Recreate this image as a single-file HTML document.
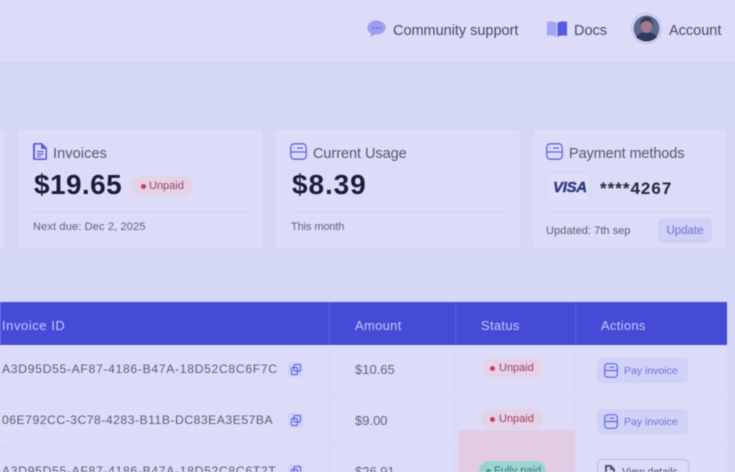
<!DOCTYPE html>
<html><head><meta charset="utf-8"><style>
html,body{margin:0;padding:0;width:735px;height:472px;overflow:hidden}
body{position:relative;background:#d5d7f6;font-family:"Liberation Sans",sans-serif;color:#4a4a68}
#w{position:absolute;left:0;top:0;width:735px;height:472px;overflow:hidden;filter:blur(.4px)}
.a{position:absolute;white-space:nowrap;line-height:1}
.card{position:absolute;top:128px;height:122px;background:#dddcf8;border:1px solid #cfd1f5;border-radius:4px;box-sizing:border-box}
.hr{position:absolute;top:211px;height:1px;background:#d0d0f1}
.badge{position:absolute;height:20px;border-radius:10px;background:#e4d3e6;color:#a33a62;font-size:11px;line-height:21px;box-sizing:border-box;white-space:nowrap}
.dot{position:absolute;width:5px;height:5px;border-radius:50%;background:#d6345f;top:8px;left:6px}
.pay{position:absolute;left:597px;width:91px;height:25px;background:#d0d1f6;border-radius:4px;color:#6c6fe0;font-size:10.5px;line-height:26px;box-sizing:border-box;padding-left:27px;white-space:nowrap}
.copy{position:absolute;left:288px;width:15px;height:15px;background:#d0d1f6;border-radius:3px}
.vl{position:absolute;width:1px;top:345px;height:127px;background:#d5d5f4}
.hl{position:absolute;left:0;width:727px;height:1px;background:#d5d5f4}
.id{position:absolute;left:2px;font-size:12.2px;color:#5c5c76;white-space:nowrap;line-height:1}
.th{position:absolute;top:319px;font-size:13px;letter-spacing:.3px;color:#c5c8fa;line-height:1;white-space:nowrap}
.amt{position:absolute;left:355px;font-size:13px;color:#62627e;line-height:1;white-space:nowrap}
.t{font-size:14.5px;color:#4a4a64}
.c{font-size:14.5px;color:#55556f}
</style></head><body><div id="w">
<div class="a" style="left:0;top:0;width:735px;height:62px;background:#dcdbf8;border-bottom:1px solid #d0d1f2"></div>

<svg class="a" style="left:367px;top:20px" width="19" height="18" viewBox="0 0 19 18"><path d="M9.5 .5C4.5 .5 .5 3.600 .5 7.800c0 2.600 1.600 4.600 3.800 5.800l-.6 3.400 4.200-2.600h1.600c5 0 9-3.200 9-6.800S14.500 .5 9.500 .5z" fill="#9c9cf0"/><circle cx="6" cy="8" r=".9" fill="#5a5ad8"/><circle cx="9.500" cy="8" r=".9" fill="#5a5ad8"/><circle cx="13" cy="8" r=".9" fill="#5a5ad8"/></svg>
<div class="a t" style="left:393px;top:23.500px;letter-spacing:-.02px">Community support</div>
<svg class="a" style="left:547px;top:21px" width="20" height="16" viewBox="0 0 20 16"><path d="M0 1c3-1 7-1 9.500 1v14C7 14 3 14 0 15z" fill="#a3a5f2"/><path d="M20 1c-3-1-7-1-9.500 1v14c2.500-2 6.500-2 9.500-1z" fill="#5558e0"/></svg>
<div class="a t" style="left:574px;top:23.500px">Docs</div>
<svg class="a" style="left:631px;top:13px" width="31" height="31" viewBox="0 0 31 31"><circle cx="15.500" cy="15.500" r="15" fill="#dcdbf8" stroke="#b9bbf2"/><circle cx="15.500" cy="15.500" r="13" fill="#5c6a96"/><path d="M5 24c3-4 7-5 10.500-5s8 1 10.500 5c-3 3-7 4.500-10.500 4.500S8 27 5 24z" fill="#303a5e"/><ellipse cx="15.500" cy="13.500" rx="5.500" ry="6.500" fill="#a47a8e"/><path d="M9 12c0-6 4-8 7-8s6 3 6 8c-2-3-4-4-6-4s-5 1-7 4z" fill="#3c3a50"/></svg>
<div class="a t" style="left:669px;top:23.500px">Account</div>

<div class="card" style="left:-20px;width:26px"></div>
<div class="card" style="left:17px;width:247px"></div>
<div class="card" style="left:274px;width:247px"></div>
<div class="card" style="left:531px;width:196px"></div>

<svg class="a" style="left:33px;top:143px" width="14" height="17" viewBox="0 0 14 17"><path d="M1.500 0h7.500l5 5v10.500a1.500 1.500 0 0 1-1.500 1.500h-11a1.500 1.500 0 0 1-1.500-1.500v-14a1.500 1.500 0 0 1 1.500-1.500z" fill="#5a5ce0"/><path d="M2 1.600h6v4.400h4.500v9.400H2z" fill="#dddcf8"/><path d="M4 8.500h6.500M4 11h6.500M4 13.300h4" stroke="#5a5ce0" stroke-width="1.200"/></svg>
<div class="a c" style="left:53px;top:146.500px;letter-spacing:.1px">Invoices</div>
<div class="a" style="left:34px;top:171px;font-size:28px;font-weight:bold;letter-spacing:.4px;color:#1c1c3a">$19.65</div>
<div class="badge" style="left:131px;top:176px;width:62px;padding-left:18px"><span class="dot" style="left:9.500px;top:7.500px"></span>Unpaid</div>
<div class="hr" style="left:33px;width:214px"></div>
<div class="a" style="left:33px;top:222px;font-size:11px;letter-spacing:.15px;color:#5f5f7c">Next due: Dec 2, 2025</div>

<svg class="a" style="left:290px;top:143px" width="18" height="18" viewBox="0 0 18 18" fill="none" stroke="#5f61e4" stroke-width="1.300"><rect x=".8" y=".8" width="15.400" height="15.400" rx="3.500"/><path d="M1 9h15M3.500 5h.8M7 5h6"/></svg>
<div class="a c" style="left:313px;top:146.500px;letter-spacing:-.05px">Current Usage</div>
<div class="a" style="left:292px;top:171px;font-size:28px;font-weight:bold;letter-spacing:.9px;color:#1c1c3a">$8.39</div>
<div class="hr" style="left:291px;width:214px"></div>
<div class="a" style="left:291px;top:222px;font-size:11px;letter-spacing:-.1px;color:#5f5f7c">This month</div>

<svg class="a" style="left:546px;top:143px" width="18" height="18" viewBox="0 0 18 18" fill="none" stroke="#5f61e4" stroke-width="1.300"><rect x=".8" y=".8" width="15.400" height="15.400" rx="3.500"/><path d="M1 9h15M3.500 5h.8M7 5h6"/></svg>
<div class="a c" style="left:569px;top:146.500px;letter-spacing:-.1px">Payment methods</div>
<div class="a" style="left:546px;top:172px;width:45px;height:30px;border:1px solid #d2d3f5;border-radius:4px;box-sizing:border-box;background:#dfdefa"></div>
<div class="a" style="left:553px;top:179.500px;font-size:15px;font-weight:bold;font-style:italic;color:#2f3a7c;letter-spacing:-.3px;-webkit-text-stroke:.4px #2f3a7c">VISA</div>
<div class="a" style="left:600px;top:180px;font-size:17px;font-weight:bold;letter-spacing:1px;color:#25253f">****4267</div>
<div class="hr" style="left:546px;width:165px"></div>
<div class="a" style="left:546px;top:226px;font-size:11px;letter-spacing:.05px;color:#5a5a74">Updated: 7th sep</div>
<div class="a" style="left:658px;top:218px;width:54px;height:25px;background:#cfd0f5;border-radius:5px;color:#6c6fe0;font-size:11.5px;line-height:26px;text-align:center">Update</div>

<div class="a" style="left:0;top:302px;width:727px;height:43px;background:#454bd6"></div>
<div class="a" style="left:329px;top:302px;width:1px;height:43px;background:#5a60dc"></div>
<div class="a" style="left:455px;top:302px;width:1px;height:43px;background:#5a60dc"></div>
<div class="a" style="left:575px;top:302px;width:1px;height:43px;background:#5a60dc"></div>
<div class="th" style="left:2px;letter-spacing:.55px">Invoice ID</div>
<div class="th" style="left:355px">Amount</div>
<div class="th" style="left:481px">Status</div>
<div class="th" style="left:601px">Actions</div>

<div class="a" style="left:0;top:345px;width:727px;height:127px;background:#dddcf8"></div>
<div class="vl" style="left:329px"></div><div class="vl" style="left:455px"></div><div class="vl" style="left:575px"></div>
<div class="hl" style="top:396px"></div><div class="hl" style="top:446px"></div>

<div class="id" style="top:363px;letter-spacing:.66px">A3D95D55-AF87-4186-B47A-18D52C8C6F7C</div>
<div class="id" style="top:414px;letter-spacing:.5px">06E792CC-3C78-4283-B11B-DC83EA3E57BA</div>
<div class="id" style="top:465px;letter-spacing:.66px">A3D95D55-AF87-4186-B47A-18D52C8C6T2T</div>

<div class="copy" style="top:362px"></div><div class="copy" style="top:413px"></div><div class="copy" style="top:464px"></div>
<svg class="a" style="left:291px;top:364px" width="10" height="11" viewBox="0 0 10 11" fill="none" stroke="#5558e0"><rect x="3" y=".5" width="6.500" height="6.500" rx="1"/><rect x=".5" y="3.500" width="6" height="7" rx="1"/></svg>
<svg class="a" style="left:291px;top:415px" width="10" height="11" viewBox="0 0 10 11" fill="none" stroke="#5558e0"><rect x="3" y=".5" width="6.500" height="6.500" rx="1"/><rect x=".5" y="3.500" width="6" height="7" rx="1"/></svg>
<svg class="a" style="left:291px;top:466px" width="10" height="11" viewBox="0 0 10 11" fill="none" stroke="#5558e0"><rect x="3" y=".5" width="6.500" height="6.500" rx="1"/><rect x=".5" y="3.500" width="6" height="7" rx="1"/></svg>

<div class="amt" style="top:363px">$10.65</div>
<div class="amt" style="top:414px">$9.00</div>
<div class="amt" style="top:465px">$26.91</div>

<div class="a" style="left:458px;top:430px;width:117px;height:42px;background:#e1cce4"></div>

<div class="badge" style="left:481px;top:358px;width:62px;padding-left:18px"><span class="dot" style="left:9px;top:8px"></span>Unpaid</div>
<div class="badge" style="left:481px;top:409px;width:62px;padding-left:18px"><span class="dot" style="left:9px;top:8px"></span>Unpaid</div>
<div class="badge" style="left:479px;top:461px;width:67px;padding-left:15px;background:#9bd3cf;color:#2d7c78"><span class="dot" style="left:7px;top:8px;background:#3d9a8e"></span>Fully paid</div>

<div class="pay" style="top:358px">Pay invoice</div>
<div class="pay" style="top:409px">Pay invoice</div>
<svg class="a" style="left:604px;top:363px" width="14" height="15" viewBox="0 0 14 15" fill="none" stroke="#6467e4" stroke-width="1.200"><rect x=".7" y=".7" width="12.600" height="13.600" rx="3"/><path d="M1 7.500h12M3 4.200h.7M5.500 4.200h5"/></svg>
<svg class="a" style="left:604px;top:414px" width="14" height="15" viewBox="0 0 14 15" fill="none" stroke="#6467e4" stroke-width="1.200"><rect x=".7" y=".7" width="12.600" height="13.600" rx="3"/><path d="M1 7.500h12M3 4.200h.7M5.500 4.200h5"/></svg>

<div class="a" style="left:597px;top:459px;width:92px;height:25px;border:1px solid #b9b9d6;border-radius:5px;box-sizing:border-box;background:#dddcf8"></div>
<svg class="a" style="left:604px;top:465px" width="12" height="14" viewBox="0 0 12 14"><path d="M1 0h6l4 4v10H1z" fill="#55556f"/><path d="M3 2h3v3h3v7H3z" fill="#dddcf8"/></svg>
<div class="a" style="left:622px;top:467px;font-size:10.5px;color:#4a4a68">View details</div>

<div class="a" style="left:727px;top:302px;width:8px;height:170px;background:#d5d7f6"></div>
</div></body></html>
